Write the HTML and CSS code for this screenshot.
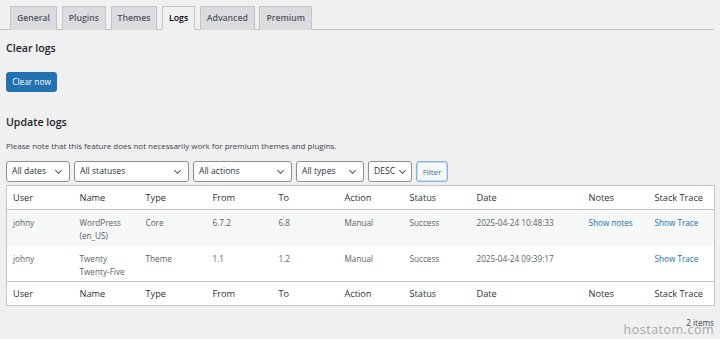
FILE: index.html
```html
<!DOCTYPE html>
<html lang="en">
<head>
<meta charset="utf-8">
<title>Logs</title>
<link rel="stylesheet" href="styles.css">
</head>
<body>
<div class="page">
  <nav class="tabs">
    <a class="tab">General</a>
    <a class="tab">Plugins</a>
    <a class="tab">Themes</a>
    <a class="tab active">Logs</a>
    <a class="tab">Advanced</a>
    <a class="tab">Premium</a>
  </nav>
  <div class="content">
    <h2 class="heading">Clear logs</h2>
    <button class="btn-primary">Clear now</button>
    <h2 class="heading second">Update logs</h2>
    <p class="note">Please note that this feature does not necessarily work for premium themes and plugins.</p>
    <div class="filters">
      <div class="select w-dates">All dates</div>
      <div class="select w-status">All statuses</div>
      <div class="select w-actions">All actions</div>
      <div class="select w-types">All types</div>
      <div class="select w-order">DESC</div>
      <button class="btn-filter">Filter</button>
    </div>
    <table class="logs">
      <colgroup>
        <col class="c67"><col class="c66"><col class="c67"><col class="c66"><col class="c66"><col class="c65"><col class="c67"><col class="c112"><col class="c66"><col class="c66">
      </colgroup>
      <thead>
        <tr><th>User</th><th>Name</th><th>Type</th><th>From</th><th>To</th><th>Action</th><th>Status</th><th>Date</th><th>Notes</th><th>Stack Trace</th></tr>
      </thead>
      <tbody>
        <tr class="alt"><td>johny</td><td>WordPress<br>(en_US)</td><td>Core</td><td>6.7.2</td><td>6.8</td><td>Manual</td><td>Success</td><td>2025-04-24 10:48:33</td><td><a class="link">Show notes</a></td><td><a class="link">Show Trace</a></td></tr>
        <tr><td>johny</td><td>Twenty<br>Twenty-Five</td><td>Theme</td><td>1.1</td><td>1.2</td><td>Manual</td><td>Success</td><td>2025-04-24 09:39:17</td><td></td><td><a class="link">Show Trace</a></td></tr>
      </tbody>
      <tfoot>
        <tr><th>User</th><th>Name</th><th>Type</th><th>From</th><th>To</th><th>Action</th><th>Status</th><th>Date</th><th>Notes</th><th>Stack Trace</th></tr>
      </tfoot>
    </table>
    <div class="count">2 items</div>
  </div>
  <div class="watermark">hostatom.com</div>
</div>
</body>
</html>
```

FILE: styles.css
```css
* { box-sizing: border-box; }
html, body { margin: 0; padding: 0; }
body {
  background: #f0f0f1;
  font-family: "Open Sans", "Noto Sans", sans-serif;
  color: #3c434a;
  width: 720px;
  height: 339px;
  overflow: hidden;
}
.page { position: relative; width: 720px; height: 339px; }
.tabs {
  display: flex;
  gap: 4.6px;
  width: 714px;
  padding: 6px 0 0 10px;
  border-bottom: 1px solid #c3c4c7;
  height: 30px;
}
.tab {
  display: block;
  height: 24px;
  padding: 0 6px;
  border: 1px solid #c3c4c7;
  border-bottom: none;
  background: #dcdcde;
  color: #50575e;
  font-size: 8.7px;
  font-weight: 600;
  line-height: 22px;
  margin-bottom: -1px;
}
.tab.active {
  background: #f0f0f1;
  color: #000;
  border-bottom: 1px solid #f0f0f1;
}
.content { padding: 0 6px; width: 720px; }
.heading {
  margin: 0;
  font-size: 10.6px;
  font-weight: 600;
  color: #1d2327;
  line-height: 16px;
  padding-top: 10px;
}
.btn-primary {
  display: block;
  margin-top: 16px;
  height: 20px;
  width: 51px;
  padding: 0;
  border: 1px solid #2271b1;
  border-radius: 3px;
  background: #2271b1;
  color: #fff;
  font-family: inherit;
  font-size: 8.3px;
  line-height: 18px;
}
.heading.second { padding-top: 22px; }
.note {
  margin: 9px 0 0;
  font-size: 8px;
  line-height: 13px;
  color: #3c434a;
}
.filters {
  display: flex;
  gap: 4px;
  margin-top: 9px;
  height: 21px;
}
.select {
  position: relative;
  height: 21px;
  border: 1px solid #8c8f94;
  border-radius: 3px;
  background: #fff;
  color: #2c3338;
  font-size: 8.6px;
  line-height: 19px;
  padding-left: 5px;
}
.select::after {
  content: "";
  position: absolute;
  right: 8px;
  top: 6px;
  width: 4px;
  height: 4px;
  border-right: 1.2px solid #50575e;
  border-bottom: 1.2px solid #50575e;
  transform: rotate(45deg);
}
.w-order::after { right: 6px; }
.w-dates { width: 64px; }
.w-status { width: 115px; }
.w-actions { width: 99px; }
.w-types { width: 68px; }
.w-order { width: 44px; }
.btn-filter {
  width: 32px;
  height: 21px;
  padding: 0;
  border: 1px solid #8db4da;
  box-shadow: 0 0 0 1px #c4d9ee inset;
  border-radius: 3px;
  background: #f6f7f7;
  color: #2271b1;
  font-family: inherit;
  font-size: 7.8px;
}
.logs {
  margin-top: 3px;
  width: 708px;
  table-layout: fixed;
  border-collapse: collapse;
  border: 1px solid #c3c4c7;
  background: #fff;
}
.c65 { width: 65px; }
.c66 { width: 66px; }
.c67 { width: 67px; }
.c112 { width: 112px; }
.logs th {
  text-align: left;
  font-weight: 400;
  font-size: 9.2px;
  color: #2c3338;
  height: 24px;
  padding: 0 6px;
  line-height: 14px;
  white-space: nowrap;
}
.logs thead th { border-bottom: 1px solid #c3c4c7; }
.logs tfoot th { border-top: 1px solid #c3c4c7; }
.logs td {
  vertical-align: top;
  font-size: 8.2px;
  line-height: 13px;
  color: #5a5f63;
  height: 36px;
  padding: 6px 6px 0;
}
.logs tr.alt td { background: #f6f7f7; }
.logs td .link { color: #2271b1; }
.count {
  text-align: right;
  font-size: 8.2px;
  line-height: 8px;
  color: #3c434a;
  margin-top: 13px;
}
.watermark {
  position: absolute;
  right: 6px;
  top: 326px;
  font-size: 12.5px;
  line-height: 8px;
  letter-spacing: 0.5px;
  color: #a7a7a7;
}
```
